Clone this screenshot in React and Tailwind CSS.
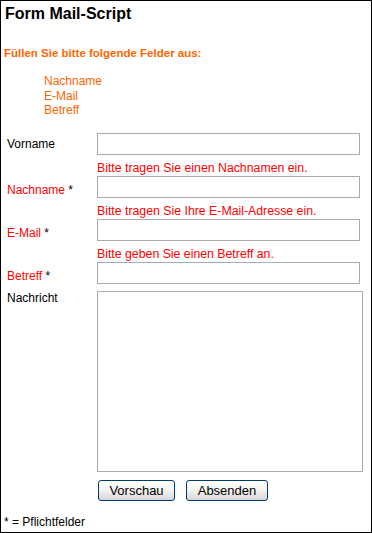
export default function App() {
  const font = { fontFamily: '"Liberation Sans", Arial, sans-serif' };
  const inputCls =
    "block w-[263px] h-[22px] border border-[#a5acb2] bg-white box-border outline-none";
  const btnCls =
    "h-[21px] box-border border border-[#003c74] rounded-[3px] bg-gradient-to-b from-white via-[#f3f3ef] to-[#d6d5d9] text-[13px] leading-[19px] text-black px-0";
  const Row = ({ label, error }) => (
    <div className="flex items-end mt-[6px]">
      <div className="w-[96px] pl-[6px] text-[12px] leading-[14px] mb-[1px]">
        <span className="text-[#ff0000]">{label}</span>
        <span className="text-black"> *</span>
      </div>
      <div className="flex flex-col">
        <div className="text-[12.3px] leading-[15px] text-[#ff0000] whitespace-nowrap">
          {error}
        </div>
        <input className={inputCls} />
      </div>
    </div>
  );
  return (
    <div
      style={font}
      className="w-[372px] h-[533px] border border-black box-border bg-white text-black overflow-hidden"
    >
      <div className="pl-[4px] pt-[4px] text-[16px] leading-[18px] font-bold">
        Form Mail-Script
      </div>
      <div className="mt-[23px] pl-[3px] text-[11.5px] leading-[14px] font-bold text-[#ff6600]">
        Füllen Sie bitte folgende Felder aus:
      </div>
      <div className="mt-[14px] h-[44px] pl-[43px] text-[12px] leading-[14.5px] text-[#ff6600]">
        <div>Nachname</div>
        <div>E-Mail</div>
        <div>Betreff</div>
      </div>

      <div className="flex items-center mt-[15px]">
        <div className="w-[96px] pl-[6px] text-[12px] leading-[14px]">Vorname</div>
        <input className={inputCls} />
      </div>

      <Row label="Nachname" error="Bitte tragen Sie einen Nachnamen ein." />
      <Row label="E-Mail" error="Bitte tragen Sie Ihre E-Mail-Adresse ein." />
      <Row label="Betreff" error="Bitte geben Sie einen Betreff an." />

      <div className="flex items-start mt-[7px]">
        <div className="w-[96px] pl-[6px] text-[12px] leading-[14px]">Nachricht</div>
        <textarea className="block w-[266px] h-[181px] border border-[#a5acb2] bg-white box-border resize-none outline-none" />
      </div>

      <div className="flex mt-[8px] pl-[97px] gap-[11px]">
        <button style={font} className={`${btnCls} w-[77px]`}>
          Vorschau
        </button>
        <button style={font} className={`${btnCls} w-[82px]`}>
          Absenden
        </button>
      </div>

      <div className="mt-[14px] pl-[3px] text-[12px] leading-[14px]">* = Pflichtfelder</div>
    </div>
  );
}
